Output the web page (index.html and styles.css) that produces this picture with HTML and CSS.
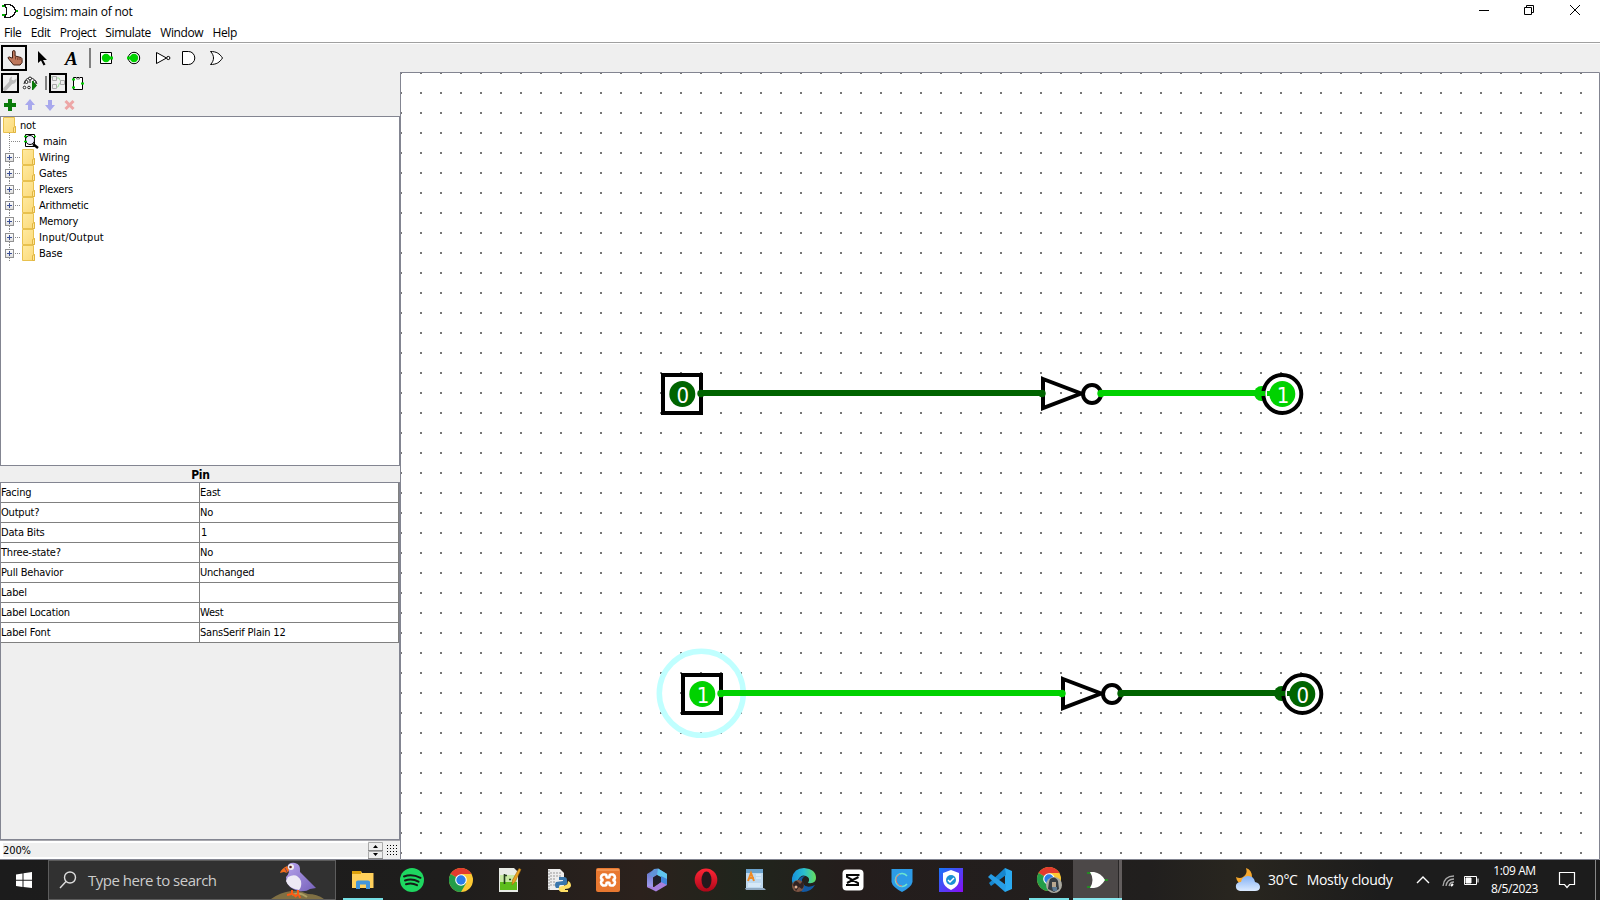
FILE: index.html
```html
<!DOCTYPE html>
<html lang="en">
<head>
<meta charset="utf-8">
<title>Logisim: main of not</title>
<link rel="stylesheet" href="styles.css">
</head>
<body>
<svg width="0" height="0" class="defs">
  <defs>
    <pattern id="grid" width="20" height="20" patternUnits="userSpaceOnUse"><rect x="0" y="12" width="2" height="2" fill="#777"/></pattern>
    <linearGradient id="fold" x1="0" y1="0" x2="1" y2="1"><stop offset="0" stop-color="#ffeaa0"/><stop offset="1" stop-color="#fbd979"/></linearGradient>
    <linearGradient id="btn" x1="0" y1="0" x2="0" y2="1"><stop offset="0" stop-color="#fff"/><stop offset="1" stop-color="#ddd"/></linearGradient>
    <linearGradient id="bird" x1="0" y1="0" x2="1" y2="1"><stop offset="0" stop-color="#b7a3ec"/><stop offset="1" stop-color="#7561ba"/></linearGradient>
    <linearGradient id="cloud" x1="0" y1="0" x2="0" y2="1"><stop offset="0" stop-color="#83b1f5"/><stop offset="1" stop-color="#dcebff"/></linearGradient>
    <linearGradient id="edge" x1="0" y1="0" x2="1" y2="0"><stop offset="0" stop-color="#168edb"/><stop offset=".5" stop-color="#29bed0"/><stop offset="1" stop-color="#66e05c"/></linearGradient>
    <linearGradient id="secure" x1="0" y1="0" x2="1" y2="1"><stop offset="0" stop-color="#1478f8"/><stop offset="1" stop-color="#8a0cf5"/></linearGradient>
    <linearGradient id="opera" x1="0" y1="0" x2="0" y2="1"><stop offset="0" stop-color="#ff2636"/><stop offset="1" stop-color="#ad0719"/></linearGradient>
    <linearGradient id="office" x1="0" y1="0" x2="0" y2="1"><stop offset="0" stop-color="#5b70c4"/><stop offset="1" stop-color="#a9a2f2"/></linearGradient>
    <g id="folder"><path d="M.5 .5h11v9h1v6H.5z" fill="url(#fold)" stroke="#e8c14e"/><path d="M10.5 15.5v-5l2-1v6z" fill="#ffe79a" stroke="#e0b540"/></g>
    <g id="expander"><path d="M9.5 0v3M9.5 13v3M15 8.5h6" stroke="#888" stroke-dasharray="1 1"/><rect x="5.5" y="4.500" width="8" height="8" fill="url(#btn)" stroke="#919191"/><path d="M7 8.500h5M9.500 6v5" stroke="#3a4f96"/></g>
    <g id="chrome"><circle cx="12" cy="12" r="12" fill="#fcc934"/><path d="M12 12 1.600 6A12 12 0 0 1 22.400 6z" fill="#e33b2e"/><path d="M12 12 1.600 6A12 12 0 0 0 12 24l5.200-9z" fill="#249d49"/><path d="M12 6h10.400l-5 9z" fill="#fcc934"/><circle cx="12" cy="12" r="5.800" fill="#fff"/><circle cx="12" cy="12" r="4.700" fill="#2b7de9"/></g>
  </defs>
</svg>

<header class="titlebar">
  <svg width="20" height="22" shape-rendering="crispEdges"><path d="M2 6h5M2 15h5M16 11h2" stroke="#0a0" stroke-width="2"/><path d="M4.500 4.500h4c4 0 6 3 7.500 6.500-1.500 3.500-4 6.500-7.500 6.500h-4c3-4 3-9 0-13z" fill="#fff" stroke="#111" stroke-width="1.300"/></svg>
  <span class="title">Logisim: main of not</span>
  <svg class="winbtns" width="140" height="22" viewBox="1460 0 140 22" fill="none" stroke="#000"><path d="M1479 10.500h10"/><path d="M1524.500 7.500h7v7h-7zM1526.500 7V5.500h7v7H1532"/><path d="m1570 5 10 10m0-10-10 10"/></svg>
</header>
<nav class="menubar"><span>File</span><span>Edit</span><span>Project</span><span>Simulate</span><span>Window</span><span>Help</span></nav>

<div class="toolbar">
  <svg width="30" height="28" viewBox="0 44 30 28"><rect x="2" y="46" width="24" height="24" fill="none" stroke="#000" stroke-width="2"/><path d="M12.500 58v-6q0-1.500 1.300-1.500t1.300 1.500v4l6 1.500q1 .5 1 2v3l-2 2.500h-6.500l-4.500-5.500q-2-2-.5-2.500 1.200-.4 2.400.8z" fill="#bf785c" stroke="#402015"/><path d="M15.500 57v2.500m2.300-2v2.500m2.200-2v2" stroke="#613524" stroke-width=".8"/></svg>
  <svg width="28" height="28" viewBox="30 44 28 28"><path d="M38 51v12l3-2.500 2.500 5 2-1-2.500-4.500h4z" fill="#000"/></svg>
  <span class="text-tool">A</span>
  <svg width="11" height="28" viewBox="84 44 11 28"><path d="M90 48v20" stroke="#808080" stroke-width="2"/></svg>
  <svg width="25" height="28" viewBox="95 44 25 28"><path d="M100.500 52.500h11v11h-11z" fill="#fff" stroke="#000"/><circle cx="106" cy="58" r="4.200" fill="#00d200"/><path d="M109 58h4" stroke="#00d200" stroke-width="3"/></svg>
  <svg width="30" height="28" viewBox="120 44 30 28"><circle cx="134" cy="58" r="5.700" fill="#fff" stroke="#000"/><circle cx="134" cy="58" r="4.200" fill="#00d200"/><path d="M127 58h4" stroke="#00d200" stroke-width="3"/></svg>
  <svg width="26" height="28" viewBox="150 44 26 28" fill="#fff" stroke="#000"><path d="m156.500 52.500 10 5.500-10 5.500z"/><circle cx="168.300" cy="58" r="1.600"/></svg>
  <svg width="27" height="28" viewBox="176 44 27 28"><path d="M182.500 51.500h6a6.300 6.500 0 0 1 0 13h-6z" fill="#fff" stroke="#000"/></svg>
  <svg width="27" height="28" viewBox="203 44 27 28"><path d="M210.500 51.500c6 0 9 2 12 6.500-3 4.500-6 6.500-12 6.500 4-4 4-9 0-13z" fill="#fff" stroke="#000"/></svg>
</div>

<main class="workspace">
  <aside class="sidebar">
    <div class="minibar views">
      <svg width="21" height="22" viewBox="0 72 21 22"><rect x="2" y="74" width="16" height="18" fill="none" stroke="#000" stroke-width="2"/><path d="m5 89 6.500-7" stroke="#bcbcbc" stroke-width="4" stroke-linecap="round"/><path d="M12 76.500c-3 1-4 5-1 7 3 1 6-1 5.500-5l-3 2-2-1z" fill="#bcbcbc"/></svg>
      <svg width="20" height="22" viewBox="21 72 20 22" fill="#fff" stroke="#222"><path d="M24 84q1-6 6-6 5 0 7 6m-7-6v5" fill="none"/><circle cx="30" cy="78.500" r="1.500"/><circle cx="26.500" cy="82" r="1.500"/><circle cx="24.500" cy="87.500" r="1.300"/><circle cx="29" cy="87.500" r="1.300"/><circle cx="34.500" cy="82" r="1.500"/><path d="M32.500 81v9l4-4.500z" fill="#087808" stroke="#087808"/></svg>
      <svg width="7" height="22" viewBox="41 72 7 22"><path d="M46 76v14" stroke="#808080" stroke-width="2"/></svg>
      <svg width="20" height="22" viewBox="48 72 20 22" fill="none"><rect x="50" y="74" width="16" height="18" stroke="#000" stroke-width="2"/><path d="M51 77h4m1 1h3q1 4 4 4m-7 5h2q1-5 4-5" stroke="#9ee09e"/><path d="M52.500 76.500h4v4h-4zM52.500 84.500h4v4h-4zM60.500 80.500h4v4h-4z" fill="#eee" stroke="#aaa"/></svg>
      <svg width="22" height="22" viewBox="68 72 22 22"><path d="M73.500 77.500h9v12h-9z" fill="#fff" stroke="#000"/><path d="M76.500 77v2h3v-2" fill="none" stroke="#777"/><path d="M72 79.500h3m6 4h3m-12 4h3" stroke="#00d200" stroke-width="2"/></svg>
    </div>
    <div class="minibar edits">
      <svg width="20" height="22" viewBox="0 94 20 22"><path d="M10 99v12M4 105h12" stroke="#087a08" stroke-width="4"/></svg>
      <svg width="20" height="22" viewBox="20 94 20 22"><path d="m30 99 5 6h-3v5h-4v-5h-3z" fill="#a8a8ed"/></svg>
      <svg width="20" height="22" viewBox="40 94 20 22"><path d="m50 111 5-6h-3v-5h-4v5h-3z" fill="#a8a8ed"/></svg>
      <svg width="20" height="22" viewBox="60 94 20 22"><path d="m65.500 101 8 8m0-8-8 8" stroke="#eda6a6" stroke-width="3"/></svg>
    </div>
    <div class="tree">
      <div class="node"><svg width="19" height="16"><use href="#folder" x="2"/></svg><span>not</span></div>
      <div class="node"><svg width="42" height="16"><path d="M8.500 0v16M10 8.500h10" stroke="#888" stroke-dasharray="1 1"/><path d="M24.500 1.500h9v12h-9z" fill="#fff" stroke="#000"/><circle cx="29" cy="7" r="4.500" fill="#eef" stroke="#000"/><path d="m32 11 5 4" stroke="#000" stroke-width="2.500"/><path d="M23 3.500h3M23 8.500h3M33 3.500h2" stroke="#00d200" stroke-width="1.500"/></svg><span>main</span></div>
      <div class="node"><svg width="38" height="16"><use href="#expander" x="-1"/><use href="#folder" x="21"/></svg><span>Wiring</span></div>
      <div class="node"><svg width="38" height="16"><use href="#expander" x="-1"/><use href="#folder" x="21"/></svg><span>Gates</span></div>
      <div class="node"><svg width="38" height="16"><use href="#expander" x="-1"/><use href="#folder" x="21"/></svg><span>Plexers</span></div>
      <div class="node"><svg width="38" height="16"><use href="#expander" x="-1"/><use href="#folder" x="21"/></svg><span>Arithmetic</span></div>
      <div class="node"><svg width="38" height="16"><use href="#expander" x="-1"/><use href="#folder" x="21"/></svg><span>Memory</span></div>
      <div class="node"><svg width="38" height="16"><use href="#expander" x="-1"/><use href="#folder" x="21"/></svg><span class="wide">Input/Output</span></div>
      <div class="node"><svg width="38" height="16"><use href="#expander" x="-1"/><use href="#folder" x="21"/></svg><span>Base</span></div>
    </div>
    <div class="attr-title">Pin</div>
    <div class="attr-area">
      <div class="attr"><span>Facing</span><span>East</span></div>
      <div class="attr"><span>Output?</span><span>No</span></div>
      <div class="attr"><span>Data Bits</span><span class="num">1</span></div>
      <div class="attr"><span>Three-state?</span><span>No</span></div>
      <div class="attr"><span>Pull Behavior</span><span>Unchanged</span></div>
      <div class="attr"><span>Label</span><span></span></div>
      <div class="attr"><span>Label Location</span><span>West</span></div>
      <div class="attr"><span>Label Font</span><span>SansSerif Plain 12</span></div>
    </div>
    <div class="zoombar">
      <div class="zoom-field">200%</div>
      <svg width="16" height="19" viewBox="368 840 16 19"><path d="M368.500 841.500h14v8h-14zM368.500 850.500h14v7h-14z" fill="#eee" stroke="#aaa"/><path d="M368 849.500h15M368 857.500h15" stroke="#888"/><path d="m373 847 2.500-3 2.500 3zM373 852h5l-2.500 3z"/></svg>
      <svg width="16" height="18" viewBox="384 841 16 18" stroke="#000" stroke-dasharray="1 2" shape-rendering="crispEdges"><path d="M387 845.500h11M387 848.500h11M387 851.500h11M387 854.500h11"/></svg>
    </div>
  </aside>

  <svg class="canvas" width="1200" height="788" viewBox="400 72 1200 788">
    <rect x="400" y="72" width="1200" height="788" fill="#fff"/>
    <rect x="400" y="72" width="1190" height="788" fill="url(#grid)"/>
    <path d="M400 72.500h1199.500V859.500H400.500V72" fill="none" stroke="#838591"/>
    <g>
      <rect x="663" y="375" width="38" height="38" fill="#fff" stroke="#000" stroke-width="4"/>
      <circle cx="682.300" cy="394" r="13" fill="#006400"/><text class="pin" x="682.700" y="402.500">0</text>
      <path d="m1043 379 38 14.500-38 14.500z" fill="none" stroke="#000" stroke-width="4"/>
      <circle cx="1092" cy="394" r="9" fill="#fff" stroke="#000" stroke-width="4"/>
      <path d="M701 393h342" stroke="#006400" stroke-width="6"/><circle cx="701" cy="393.500" r="3.700" fill="#006400"/><circle cx="1042" cy="393.500" r="3.700" fill="#006400"/>
      <path d="M1101 393h161" stroke="#00d200" stroke-width="6"/><circle cx="1101" cy="393.500" r="3.700" fill="#00d200"/><circle cx="1261.500" cy="393.500" r="7.500" fill="#00d200"/>
      <circle cx="1282.300" cy="394" r="19" fill="#fff" stroke="#000" stroke-width="4"/>
      <path d="M1261 391h4v5h-4zM1267 391h7v5h-7z" fill="#00d200"/>
      <circle cx="1282.300" cy="394" r="13" fill="#00d200"/><text class="pin" x="1283" y="402.500">1</text>
    </g>
    <g>
      <circle cx="701.300" cy="693.300" r="42" fill="none" stroke="#c0ffff" stroke-width="5.500"/>
      <rect x="683" y="675" width="38" height="38" fill="#fff" stroke="#000" stroke-width="4"/>
      <circle cx="702.300" cy="694" r="13" fill="#00d200"/><text class="pin" x="703" y="702.500">1</text>
      <path d="m1063 679 38 14.500-38 14.500z" fill="none" stroke="#000" stroke-width="4"/>
      <circle cx="1112" cy="694" r="9" fill="#fff" stroke="#000" stroke-width="4"/>
      <path d="M721 693h342" stroke="#00d200" stroke-width="6"/><circle cx="721" cy="693.500" r="3.700" fill="#00d200"/><circle cx="1062" cy="693.500" r="3.700" fill="#00d200"/>
      <path d="M1121 693h161" stroke="#006400" stroke-width="6"/><circle cx="1121" cy="693.500" r="3.700" fill="#006400"/><circle cx="1281.500" cy="693.500" r="7.500" fill="#006400"/>
      <circle cx="1302.300" cy="694" r="19" fill="#fff" stroke="#000" stroke-width="4"/>
      <path d="M1281 691h4v5h-4zM1287 691h7v5h-7z" fill="#006400"/>
      <circle cx="1302.300" cy="694" r="13" fill="#006400"/><text class="pin" x="1302.700" y="702.500">0</text>
    </g>
    <path d="M1060 392h2v2h-2zM1080 692h2v2h-2z" fill="#777"/>
  </svg>
</main>

<footer class="taskbar">
  <svg width="48" height="40"><path d="m16 14.500 6.500-1v6.200H16zM23.500 13.300 32 12v7.700h-8.500zM16 20.700h6.500v6.200l-6.500-1zM23.500 20.700H32V28l-8.500-1z" fill="#fff"/></svg>
  <div class="search">
    <svg width="39" height="38" fill="none" stroke="#ddd" stroke-width="1.400"><circle cx="21" cy="16.500" r="5.500"/><path d="m17 20.500-6 6.500"/></svg>
    <span>Type here to search</span>
    <svg class="puffin" width="64" height="38" viewBox="0 0 64 38"><path d="M1 38q10-7 20-8 8-1 17 3 9 0 16 5z" fill="#807044"/><path d="M22 34q7-4 15 2" stroke="#ada063" stroke-width="2" fill="none"/><path d="M17 7q1-6 8-5 6 1 5 9 8 8 16 16l-6 1q-4 3-11 2-13-3-13-14 2-2 3-5z" fill="url(#bird)"/><path d="M18 16q9-5 13 4 1 6-2 9-11-2-13-9z" fill="#ede9f5"/><path d="M17 5q-6 3-7 7l4-1q4 2 5-2z" fill="#f36d1b"/><path d="m15 7 2 4" stroke="#704060"/><circle cx="21" cy="6" r="3" fill="#f0eeee"/><circle cx="20.500" cy="6" r="1.300" fill="#602020"/><path d="M22 29v4l-5 1m6-1 2 2m3-6v4l-3 3m4-2 1 3" stroke="#ff5a14" stroke-width="2" fill="none"/></svg>
  </div>
  <div class="apps">
    <div class="app open"><svg width="24" height="24"><path d="M1 3h9l1 2h11.500v15H1z" fill="#ffd05b"/><path d="M1 3h9v3H1z" fill="#dda10c"/><path d="M5 21v-7q0-1.500 2-1.500h10q2 0 2 1.500v7h-4v-4.500H9V21z" fill="#4296dc"/></svg></div>
    <div class="app"><svg width="24" height="24"><circle cx="12" cy="12" r="12" fill="#1ed760"/><path d="M4 8.500q8-3 16.500 1.300M5 12.500q7-2.500 13.500 1.200M6 16.200q6-1.800 11 1" stroke="#151b17" stroke-width="2" fill="none" stroke-linecap="round"/></svg></div>
    <div class="app"><svg width="24" height="24"><use href="#chrome"/></svg></div>
    <div class="app"><svg width="24" height="24"><path d="M1 0h15l4 4v20H1z" fill="#e9ece6"/><path d="M2 7h17v15H2z" fill="#c7e9a2"/><path d="M2 14h17v8H2z" fill="#5dbd1c"/><path d="M6.500 6v10M7 7.500h2m2 4h2m2 0h2" stroke="#233d1c" stroke-width="1.600"/><path d="m14 17 .5-5L21 .500l2 1L17 14z" fill="#e9a221" stroke="#a36b16" stroke-width=".6"/></svg></div>
    <div class="app"><svg width="24" height="24"><path d="M1 1h12l4 4v17H1z" fill="#eee"/><path d="M3 5h12M3 8h12M3 11h6M3 14h5M3 17h5M2 2v20" stroke="#999" stroke-dasharray="2 1"/><path d="M12 9h5q3 0 3 3v3q0 2-3 2h-4q-1 0-1 3H9q-2-3 0-6l7-1v-1h-4z" fill="#3976ac"/><path d="M21 13q3 1 3 5-1 3-6 3v1h3v2h-7q-3-1-2-5l7-2q2-1 2-4z" fill="#ffe065"/></svg></div>
    <div class="app"><svg width="24" height="24"><rect width="24" height="24" rx="2" fill="#e87830"/><path d="M1 2h22" stroke="#ffb070"/><path d="M7 6.500h2q1.500 0 1.500 2 0 1 1.500 1t1.500-1q0-2 1.500-2h2q2 1 2 3 0 2-2.500 2.500 2.500.5 2.500 2.500 0 2-2 3h-2q-1.500 0-1.500-2 0-1-1.500-1t-1.500 1q0 2-1.500 2H7q-2-1-2-3 0-2 2.500-2.500Q5 11.500 5 9.500q0-2 2-3z" fill="none" stroke="#fff" stroke-width="2.600"/></svg></div>
    <div class="app"><svg width="24" height="24"><path d="M10 1 2 6v13l6 2V9.500l4-2.500V2z" fill="url(#office)"/><path d="m9 1 4-.5L22 6v5L12 6 8 9 4 7z" fill="#6194d8"/><path d="m13 .500 9 5.500v6l-10-5z" fill="#60c6ef"/><path d="M22 11v6l-11 6.500L2 19v-1l7 1 7-5V9z" fill="#a780dd"/><path d="M22 11v6l-6-3V8z" fill="#4187db"/><path d="m8.500 9.500 3.500-2 4 2.500v4L12 16.500 8.500 14z" fill="#20202a"/></svg></div>
    <div class="app"><svg width="24" height="24"><ellipse cx="12" cy="12" rx="11.300" ry="11.500" fill="url(#opera)"/><ellipse cx="12.500" cy="12" rx="5" ry="8.500" fill="#25191d"/></svg></div>
    <div class="app"><svg width="24" height="24"><path d="M3 1h17v20H3z" fill="#bed9ef"/><path d="M3 1h17v4H3z" fill="#6ba3cd"/><path d="M2 20h19l2 2H3z" fill="#90a9c1"/><path d="M5 13 8 5l3 8M6 10h5" stroke="#f08b24" stroke-width="2" fill="none"/><path d="M13 7h5m-5 3h5M5 16h13M5 18h12" stroke="#eef8ff"/></svg></div>
    <div class="app"><svg width="26" height="26"><path d="M1 11Q3 1 13 1q12 1 12 10 0 6-8 5 3-5-2-7-5-2-8 4l-1 7q-6-2-5-9z" fill="url(#edge)"/><path d="M14 9q-5 3-2 8 4 5 12 1-4 7-12 7Q5 24 6 16q2-7 8-7z" fill="#125aa4"/><circle cx="7" cy="19" r="6" fill="#7d5443"/><path d="M2 18q2-6 5-3l2 2 3-3q2 5-1 8L8 20l-3 4z" fill="#302223"/><circle cx="5" cy="20" r="1.500" fill="#e1b092"/></svg></div>
    <div class="app"><svg width="24" height="24"><rect x="1.500" y="1.500" width="21" height="21" rx="4" fill="#fff"/><path d="M17.500 8V7H6v2l11 6v2H6v-1m0-1 11.500-6" fill="none" stroke="#080808" stroke-width="2"/></svg></div>
    <div class="app"><svg width="24" height="24"><path d="M1.500 1h21v13q-1 5-10.500 10Q2.500 19 1.500 14z" fill="#2d9be7"/><path d="M17 8a6.500 6.500 0 1 0 0 8" fill="none" stroke="#6be4d0" stroke-width="1.500"/><path d="M10 6q-6 3-3 9 1 3 5 3" fill="none" stroke="#df7478"/></svg></div>
    <div class="app"><svg width="24" height="24"><rect width="24" height="24" fill="url(#secure)"/><path d="m12 2 8 3v8q-1 6-8 9-7-3-8-9V5z" fill="#fff"/><circle cx="12" cy="12" r="5" fill="#1b91d4"/><path d="m9 12 2 2 4-4" fill="none" stroke="#fff" stroke-width="1.500"/></svg></div>
    <div class="app"><svg width="24" height="24"><path d="M17 0 24 3v18l-7 3z" fill="#2baaf0"/><path d="M17 0 1 15l2 3L18 7z" fill="#1687cf"/><path d="M3 6 0 9l17 15 1-7z" fill="#279de5"/></svg></div>
    <div class="app open"><svg width="26" height="26" viewBox="-1 0 26 26"><use href="#chrome"/><circle cx="17" cy="18" r="8" fill="#aaa9a0"/><path d="M11 22q1-8 2-10 5-4 8 2l1 8-5 3z" fill="#363d43"/><path d="M15 15h4v5h-4z" fill="#b8a790"/><path d="M15 20h5v4h-4z" fill="#5b7993"/></svg></div>
    <div class="app active"><svg width="24" height="24"><path d="M1 5h4M1 19h4M18 12h4" stroke="#18a018" stroke-width="1.500"/><path d="M4 4h4q7 1 11 8-4 7-11 8H4q5-8 0-16z" fill="#fff"/></svg><i></i></div>
  </div>
  <div class="tray">
    <svg width="34" height="40" viewBox="1230 860 34 40"><path d="M1246 868q2 6-3 9-3 2-7 0 1 7 8 8 8-1 8-8 0-7-6-9z" fill="#f7a82c"/><path d="M1240 891q-5-1-4-6 1-3 5-3 1-6 7-6 6 0 7 6 5 1 5 5 0 4-5 4z" fill="url(#cloud)"/></svg>
    <span class="weather"><span>30°C</span><span>Mostly cloudy</span></span>
    <svg width="72" height="40" viewBox="1412 860 72 40" fill="none" stroke="#fff"><path d="m1417 883 6-6 6 6" stroke-width="1.400"/><path d="M1443 886q1-10 11-10M1446 886q1-7 8-7M1449 886q1-4 5-4" stroke="#aaa" stroke-width="1.300"/><path d="m1451 886 2-2" stroke-width="2"/><path d="M1464.500 876.500h12v8h-12zM1478 878.500v4"/><path d="M1466 878h5v5h-5z" fill="#fff"/></svg>
    <div class="clock"><span>1:09 AM</span><span>8/5/2023</span></div>
    <svg width="40" height="40" viewBox="1545 860 40 40"><path d="M1559.500 872.500h15v12h-5l-2.500 3-2.500-3h-5z" fill="none" stroke="#fff" stroke-width="1.200"/></svg>
    <div class="show-desktop"></div>
  </div>
</footer>
</body>
</html>
```

FILE: styles.css
```css
* { box-sizing: border-box; }
body { margin: 0; width: 1600px; height: 900px; overflow: hidden; display: flex; flex-direction: column; background: #fff; color: #000; font: 11px/16px "DejaVu Sans Condensed", "DejaVu Sans", sans-serif; }
svg { display: block; flex: none; }
.defs { width: 0; height: 0; }
.titlebar { height: 22px; display: flex; align-items: center; font: 12px/22px "Open Sans", "Noto Sans", sans-serif; }
.title { margin-left: 3px; padding-top: 2px; letter-spacing: -.2px; white-space: nowrap; }
.winbtns { margin-left: auto; }
.menubar { height: 21px; display: flex; gap: 9.3px; padding-left: 4px; font: 12px/21px "Open Sans", "Noto Sans", sans-serif; letter-spacing: -.4px; border-bottom: 1px solid #a0a0a0; }
.toolbar { height: 29px; border-top: 1px solid #fff; background: #efefef; display: flex; }
.text-tool { width: 26px; padding-left: 7px; font: italic bold 19px/29px "Liberation Serif", serif; }
.workspace { display: flex; height: 788px; }
.sidebar { width: 400px; background: #efefef; display: flex; flex-direction: column; }
.minibar { height: 22px; display: flex; }
.tree { height: 350px; background: #fff; border: 1px solid #838591; }
.node { height: 16px; display: flex; align-items: center; letter-spacing: -.2px; }
.node span { padding-top: 2px; }
.node .wide { letter-spacing: .12px; }
.attr-title { height: 16px; padding-left: 1px; text-align: center; font: bold 12px/18px "DejaVu Sans Condensed", sans-serif; letter-spacing: -.2px; }
.attr-area { height: 358px; border: 1px solid #838591; }
.attr { height: 20px; width: 398px; display: grid; grid-template-columns: 199px 199px; background: #fff; border-bottom: 1px solid #808080; line-height: 19px; letter-spacing: -.2px; }
.attr span { border-right: 1px solid #808080; }
.attr .num { padding-left: 1px; }
.zoombar { height: 20px; display: flex; border-top: 1px solid #a8a8ae; border-bottom: 1px solid #838591; }
.zoom-field { width: 368px; border: solid #fff; border-width: 2px 0 2px 3px; line-height: 16px; letter-spacing: -.1px; }
.canvas { font-family: "DejaVu Sans Condensed", sans-serif; }
.pin { font-size: 22px; fill: #fff; text-anchor: middle; }
.taskbar { height: 40px; display: flex; background: linear-gradient(90deg, #1c1c1c 0, #1e1d1c 450px, #2b211c 640px, #20251c 745px, #241d1c 850px, #211f1e 1150px, #29261f 1240px, #1c1c1c 1380px); color: #fff; font-family: "Open Sans", "Noto Sans", sans-serif; }
.search { width: 288px; height: 40px; border: 1px solid #5d5d5d; background: #313131; display: flex; align-items: center; font-size: 15px; color: #ccc; letter-spacing: -.5px; }
.search > span { width: 182px; white-space: nowrap; }
.apps { display: flex; margin-left: 2px; }
.app { width: 49px; height: 40px; display: flex; align-items: center; justify-content: center; }
.app.open { background: linear-gradient(#76dfe5, #76dfe5) center bottom / 40px 2px no-repeat; }
.app.active { position: relative; background: linear-gradient(#8be9f0, #8be9f0) center bottom / 49px 2px no-repeat, #4c4848; }
.app.active i { width: 4px; height: 38px; position: absolute; right: 0; top: 0; background: #625d5d; border-left: 1px solid #292727; }
.tray { margin-left: auto; display: flex; align-items: center; }
.weather { width: 148px; padding-left: 4px; display: flex; gap: 9px; font-size: 14px; white-space: nowrap; letter-spacing: -.3px; }
.clock { width: 61px; display: flex; flex-direction: column; align-items: center; font-size: 12px; line-height: 18px; letter-spacing: -.4px; }
.show-desktop { width: 15px; height: 40px; background: linear-gradient(#888, #888) 10px 0 / 1px 40px no-repeat; }
```
